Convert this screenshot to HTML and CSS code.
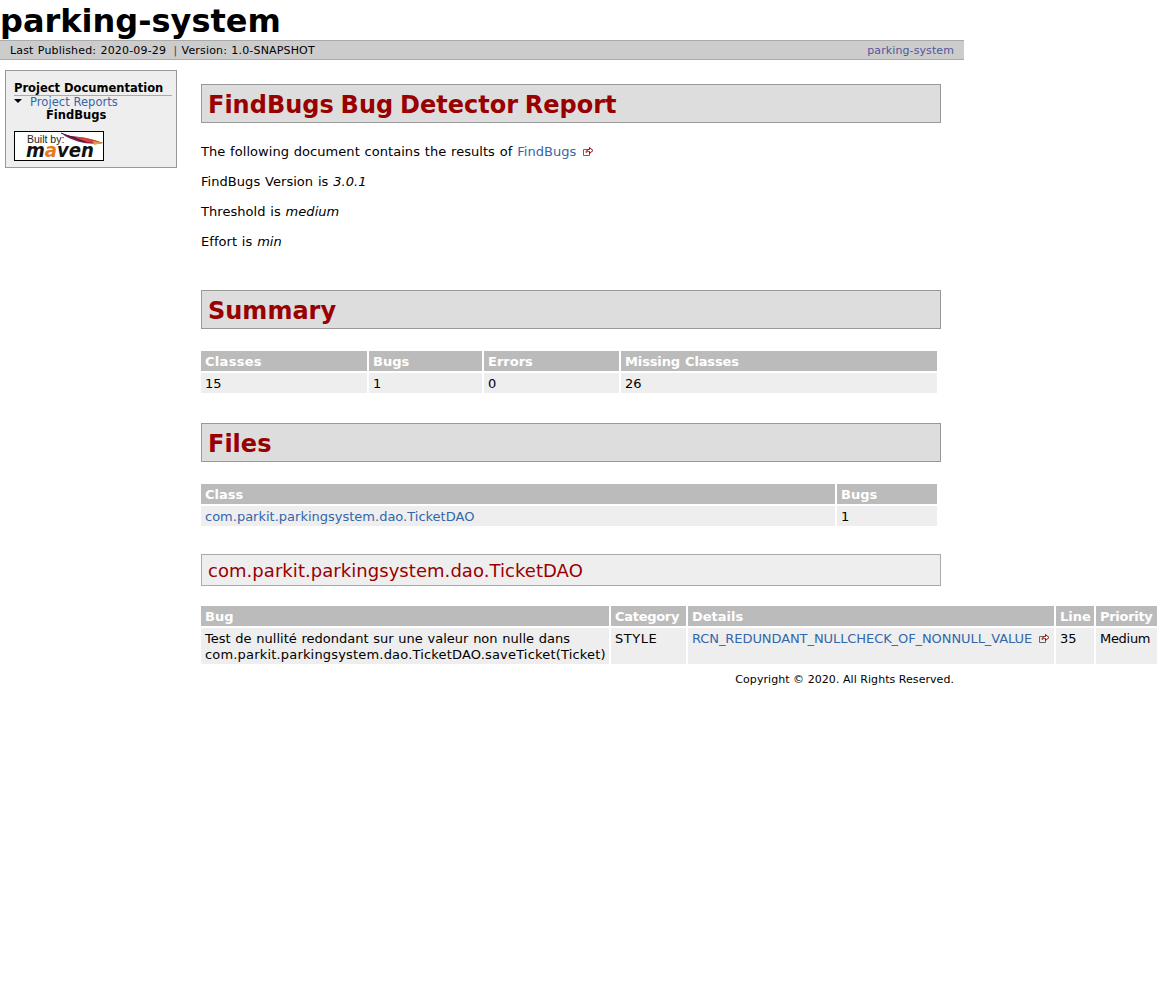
FILE: index.html
```html
<!DOCTYPE html>
<html lang="en">
<head>
  <meta charset="UTF-8" />
  <title>FindBugs Bug Detector Report</title>
  <link rel="stylesheet" href="styles.css">
</head>
<body>
  <div class="page">
    <h1 class="banner">parking-system</h1>
    <div class="breadcrumbs">
      <div class="pub">Last Published: 2020-09-29 <span class="sep">|</span> Version: 1.0-SNAPSHOT</div>
      <a class="crumb-link" href="#">parking-system</a>
    </div>
  </div>

  <div class="layout">
    <div class="side">
      <h5>Project Documentation</h5>
      <div class="nav-item"><span class="arrow"></span><a href="#">Project Reports</a></div>
      <div class="nav-sub">FindBugs</div>
      <div class="built">
        <svg width="88" height="28" viewBox="0 0 88 28">
          <path d="M47 2 C56 5 70 4 88 11 C76 13 60 11 47 2 Z" fill="#8f1a4c"/>
          <path d="M60 5 C70 5 80 8 88 11 C80 12 68 10 60 5 Z" fill="#d4433a"/>
          <path d="M78 9 L88 11 L79 13 Z" fill="#d9a43a"/>
          <path d="M46 1 L70 10" stroke="#222244" stroke-width="1" fill="none"/>
          <text x="12" y="11" class="built-by">Built by:</text>
          <text x="11" y="25" class="mvn" textLength="68" lengthAdjust="spacingAndGlyphs">m<tspan fill="#e87a1d">a</tspan>ven</text>
        </svg>
      </div>
    </div>

    <div class="main">
      <h2>FindBugs Bug Detector Report</h2>
      <p>The following document contains the results of <a href="#">FindBugs</a><svg class="ext" width="11" height="11" viewBox="0 0 11 11"><path d="M0.5 3.5H6M0.5 3.5V9.5H6.5V7" stroke="#666" fill="none"/><path d="M3 6.5C3 4.5 4.5 3.5 6.5 3.5V1.5L10 4.5L6.5 7.5V5.5C5 5.5 4 5.5 3 6.5Z" fill="#fff" stroke="#900"/></svg></p>
      <p>FindBugs Version is <i>3.0.1</i></p>
      <p>Threshold is <i>medium</i></p>
      <p>Effort is <i>min</i></p>

      <h2 class="gap">Summary</h2>
      <table>
        <tr><th class="w-classes">Classes</th><th class="w-bugs">Bugs</th><th class="w-errors">Errors</th><th class="w-missing">Missing Classes</th></tr>
        <tr><td>15</td><td>1</td><td>0</td><td>26</td></tr>
      </table>

      <h2 class="gap2">Files</h2>
      <table>
        <tr><th class="w-class">Class</th><th class="w-filebugs">Bugs</th></tr>
        <tr><td><a href="#">com.parkit.parkingsystem.dao.TicketDAO</a></td><td>1</td></tr>
      </table>

      <h3>com.parkit.parkingsystem.dao.TicketDAO</h3>
      <table class="wide">
        <tr><th class="w-bug">Bug</th><th class="w-cat">Category</th><th class="w-details">Details</th><th class="w-line">Line</th><th class="w-priority">Priority</th></tr>
        <tr>
          <td>Test de nullité redondant sur une valeur non nulle dans<br><span class="sig">com.parkit.parkingsystem.dao.TicketDAO.saveTicket(Ticket)</span></td>
          <td class="val-style">STYLE</td>
          <td class="nowrap"><a class="rule" href="#">RCN_REDUNDANT_NULLCHECK_OF_NONNULL_VALUE</a><svg class="ext" width="11" height="11" viewBox="0 0 11 11"><path d="M0.5 3.5H6M0.5 3.5V9.5H6.5V7" stroke="#666" fill="none"/><path d="M3 6.5C3 4.5 4.5 3.5 6.5 3.5V1.5L10 4.5L6.5 7.5V5.5C5 5.5 4 5.5 3 6.5Z" fill="#fff" stroke="#900"/></svg></td>
          <td>35</td>
          <td class="val-medium">Medium</td>
        </tr>
      </table>
    </div>
  </div>

  <div class="footer">Copyright © 2020. All Rights Reserved.</div>
</body>
</html>
```

FILE: styles.css
```css
* {
  box-sizing: border-box;
}

body {
  margin: 0;
  background: #fff;
  color: #000;
  font-family: "DejaVu Sans", Verdana, sans-serif;
  font-size: 13px;
  line-height: 16px;
  word-spacing: 0.6px;
}

a {
  color: #36a;
  text-decoration: none;
}

.page {
  width: 964px;
}

.banner {
  margin: 0;
  height: 40px;
  font-size: 32px;
  line-height: 42px;
  font-weight: bold;
  word-spacing: 0;
}

.breadcrumbs {
  display: flex;
  justify-content: space-between;
  height: 20px;
  padding: 1px 10px 0;
  background: #ccc;
  border-top: 1px solid #aaa;
  border-bottom: 1px solid #aaa;
  font-size: 11px;
  line-height: 17px;
  letter-spacing: 0.1px;
}

.pub {
  letter-spacing: 0.17px;
}

.sep {
  color: #733;
  margin-left: 3px;
}

.crumb-link {
  color: #559;
}

.layout {
  display: flex;
  align-items: flex-start;
  padding: 10px 0 0 5px;
}

.side {
  flex: none;
  width: 172px;
  height: 98px;
  padding: 11px 4px 0 8px;
  background: #eee;
  border: 1px solid #999;
  font-size: 11.5px;
  line-height: 13px;
  word-spacing: 0;
}

.side h5 {
  margin: 0;
  font-size: 11.5px;
  line-height: 13px;
  border-bottom: 1px solid #aaa;
}

.nav-item {
  position: relative;
  padding-left: 16px;
  letter-spacing: 0.05px;
}

.arrow {
  position: absolute;
  left: 0;
  top: 3px;
  border: 4px solid transparent;
  border-top: 4px solid #000;
}

.nav-sub {
  padding-left: 32px;
  font-weight: bold;
}

.built {
  width: 90px;
  height: 30px;
  margin-top: 9px;
  background: #fff;
  border: 1px solid #000;
}

.built svg {
  display: block;
  overflow: visible;
}

.built-by {
  font-family: "Liberation Sans", sans-serif;
  font-size: 10.5px;
  fill: #222;
}

.mvn {
  font-family: "DejaVu Sans", sans-serif;
  font-size: 20px;
  font-weight: bold;
  font-style: italic;
  fill: #111;
}

.main {
  width: 740px;
  margin-left: 24px;
  padding-top: 14px;
}

h2 {
  margin: 0;
  height: 39px;
  padding: 1px 6px 0;
  background: #ddd;
  border: 1px solid #999;
  color: #900;
  font-size: 24px;
  line-height: 39px;
  font-weight: bold;
  word-spacing: -1.5px;
}

h2.gap {
  margin-top: 40px;
}

h2.gap2 {
  margin-top: 28px;
}

h3 {
  margin: 26px 0 18px;
  height: 32px;
  padding: 0 6px;
  background: #eee;
  border: 1px solid #aaa;
  color: #900;
  font-size: 18px;
  line-height: 31px;
  font-weight: normal;
  letter-spacing: 0.05px;
  word-spacing: 0;
}

p {
  margin: 14px 0;
  letter-spacing: 0.05px;
}

h2 + p {
  margin-top: 21px;
}

.ext {
  margin-left: 7px;
  vertical-align: -1px;
}

table {
  margin-top: 20px;
  margin-left: -2px;
  margin-right: -2px;
  border-collapse: separate;
  border-spacing: 2px;
}

h3 + table {
  margin-top: 0;
}

th {
  padding: 3px 4px 1px;
  background: #bbb;
  color: #fff;
  text-align: left;
  line-height: 16px;
}

td {
  padding: 3px 4px 1px;
  background: #eee;
  vertical-align: top;
}

.nowrap {
  white-space: nowrap;
}

.sig {
  letter-spacing: 0.18px;
}

.rule {
  letter-spacing: -0.08px;
}

.val-style {
  letter-spacing: 0.5px;
}

.val-medium {
  letter-spacing: -0.3px;
}

.wide {
  width: 960px;
  table-layout: fixed;
}

.w-classes { width: 166px; letter-spacing: 0.3px; }
.w-bugs { width: 113px; }
.w-errors { width: 135px; }
.w-missing { width: 316px; letter-spacing: -0.13px; }
.w-class { width: 634px; }
.w-filebugs { width: 100px; }
.w-bug { width: 408px; }
.w-cat { width: 75px; letter-spacing: -0.3px; }
.w-details { width: 366px; }
.w-line { width: 38px; }
.w-priority { width: 61px; letter-spacing: -0.3px; }

.footer {
  width: 954px;
  margin-top: 6px;
  text-align: right;
  font-size: 11px;
  letter-spacing: 0.05px;
  word-spacing: 0;
}
```
